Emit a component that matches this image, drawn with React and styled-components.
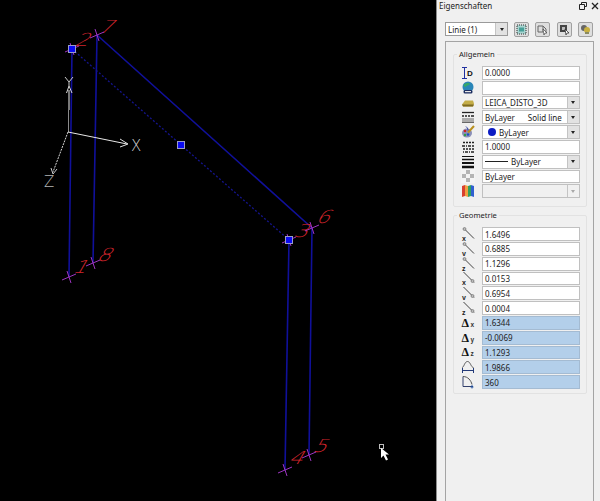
import React from 'react';
import styled, { createGlobalStyle } from 'styled-components';

const GlobalStyle = createGlobalStyle`
  html, body {
    margin: 0;
    padding: 0;
    background: #000;
  }
  #root {
    height: 501px;
  }
`;

const Screen = styled.div`
  display: flex;
  width: 600px;
  height: 501px;
  overflow: hidden;
  font-family: "Noto Sans", "Liberation Sans", sans-serif;
  font-size: 8px;
  color: #222;
`;

const Canvas = styled.div`
  width: 436px;
  height: 501px;
  background: #000;
  flex-shrink: 0;
`;

const Drawing = styled.svg`
  display: block;
`;

const Panel = styled.div`
  flex: 1;
  display: flex;
  flex-direction: column;
  background: #f0f0f0;
  border-left: 1px solid #8c8c8c;
`;

const TitleBar = styled.div`
  height: 19px;
  display: flex;
  align-items: center;
  justify-content: space-between;
  padding: 0 1px 8px 2px;
  box-sizing: border-box;
  font-size: 8px;
`;

const TitleIcons = styled.div`
  display: flex;
  align-items: center;
  gap: 4px;
`;

const Toolbar = styled.div`
  display: flex;
  align-items: center;
  height: 14px;
  margin: 3px 0 0 8px;
`;

const ObjectSelect = styled.div`
  width: 63px;
  height: 14px;
  box-sizing: border-box;
  display: flex;
  align-items: center;
  justify-content: space-between;
  background: #fff;
  border: 1px solid #9a9a9a;
  padding-left: 2px;
  margin-right: 6px;
`;

const ToolButton = styled.div`
  width: 15px;
  height: 15px;
  box-sizing: border-box;
  margin-right: 6.4px;
  display: flex;
  align-items: center;
  justify-content: center;
  background: #dedede;
  border: 1px solid #a0a0a0;
  border-radius: 2px;
`;

const Sheet = styled.div`
  flex: 1;
  margin: 5px 6px 0 8px;
  padding: 7px 6px 0 7px;
  border: 1px solid #a4a4a4;
  border-bottom: none;
`;

const Group = styled.fieldset`
  margin: 0 0 3px 0;
  padding: 6px 6px ${(props) => props.$bottom}px 7px;
  border: 1px solid #e2e2e2;
  border-radius: 2px;
  display: flex;
  flex-direction: column;
  gap: 1px;
  min-width: 0;
`;

const GroupTitle = styled.legend`
  padding: 0 2px;
  margin-left: -4px;
  font-size: 7.6px;
  line-height: 11px;
`;

const Row = styled.div`
  display: flex;
  align-items: center;
  height: 13.8px;
`;

const RowIcon = styled.div`
  width: 21px;
  flex-shrink: 0;
  display: flex;
  justify-content: flex-start;
`;

const Field = styled.div`
  width: 97.5px;
  height: 100%;
  box-sizing: border-box;
  display: flex;
  align-items: center;
  padding-left: 2px;
  white-space: nowrap;
  background: ${(props) => (props.$tone === 'calc' ? '#b3cfea' : props.$tone === 'off' ? '#f0f0f0' : '#fff')};
  border: 1px solid ${(props) => (props.$tone === 'calc' ? '#a4bbd2' : '#c0c0c0')};
`;

const FieldText = styled.span`
  flex: 1;
  display: flex;
  align-items: center;
  gap: 3px;
`;

const DropArrow = styled.div`
  width: 11px;
  height: 100%;
  flex-shrink: 0;
  display: flex;
  align-items: center;
  justify-content: center;
  background: ${(props) => (props.$off ? '#f0f0f0' : '#e2e2e2')};
  border-left: 1px solid #c4c4c4;
  &::after {
    content: '';
    border-left: 2.5px solid transparent;
    border-right: 2.5px solid transparent;
    border-top: 3px solid ${(props) => (props.$off ? '#a8a8a8' : '#222')};
  }
`;

const ColorDot = styled.span`
  width: 8px;
  height: 8px;
  margin-left: 3px;
  border-radius: 50%;
  background: #0c1cc4;
`;

const LineSample = styled.span`
  width: 23px;
  height: 1px;
  background: #222;
`;

const Gap = styled.span`
  width: ${(props) => props.$w}px;
`;

const Small = ({ children, w = 14, h = 14 }) => (
  <svg width={w} height={h} viewBox={`0 0 ${w} ${h}`}>{children}</svg>
);

const IconDim = () => (
  <Small>
    <path d="M1 1.500h5M1 12.500h5M3.500 2v10" stroke="#2030a0" strokeWidth="1" fill="none" />
    <text x="6" y="10" fontSize="8" fontWeight="700" fontFamily="Liberation Sans" fill="#111">D</text>
  </Small>
);
const IconGlobe = () => (
  <Small>
    <circle cx="7" cy="6" r="5.500" fill="#2a86b8" />
    <path d="M3 3.500c2-2 5-2 6-.5-1 2-4 1-4 3-2 0-3-1-2-2.500z" fill="#35a868" />
    <rect x="2.500" y="9" width="9" height="3.500" rx="1.500" fill="#1c2c60" />
    <rect x="4" y="10" width="6" height="1.200" fill="#e8e8e8" />
  </Small>
);
const IconLayer = () => (
  <Small>
    <path d="M1 8.500L4 4.500h8l1 3-1 3H2z" fill="#c4ad48" />
    <path d="M1 8.500h12l-1 2H2z" fill="#7d6a20" />
  </Small>
);
const IconLinetype = () => (
  <Small>
    <path d="M1 2.500h12" stroke="#222" strokeWidth="1.300" />
    <path d="M1 6h2M4 6h2M7 6h2M10 6h3" stroke="#222" strokeWidth="1.500" />
    <path d="M2 8v4M4 8v4M6 8v4M8 8v4M10 8v4M12 8v4M1 12.500h12" stroke="#444" strokeWidth="0.800" />
  </Small>
);
const IconPalette = () => (
  <Small>
    <ellipse cx="6" cy="8" rx="5" ry="4.500" fill="#8a8fb8" />
    <circle cx="4" cy="6" r="1.300" fill="#d02020" />
    <circle cx="7" cy="9.500" r="1.300" fill="#2050c0" />
    <circle cx="4" cy="10" r="1.200" fill="#30a040" />
    <path d="M13 1L7 7.500" stroke="#b89020" strokeWidth="2" />
    <path d="M5 1.500c1 1 2 2 2 4" stroke="#3040a0" strokeWidth="1" fill="none" />
  </Small>
);
const IconScale = () => (
  <Small>
    <path d="M2 2.500h2M5 2.500h2M8 2.500h2M11 2.500h2" stroke="#222" strokeWidth="1.500" />
    <path d="M1 6h3M5 6h1M7 6h3M11 6h2" stroke="#222" strokeWidth="1.500" />
    <path d="M2 9h2M5 9h2M8 9h2M11 9h2M2 12h1M4 12h3M8 12h1M10 12h3" stroke="#222" strokeWidth="1.500" />
  </Small>
);
const IconWeight = () => (
  <Small>
    <path d="M1 1.500h12" stroke="#111" strokeWidth="1" />
    <path d="M1 4.500h12" stroke="#111" strokeWidth="1.500" />
    <path d="M1 8h12" stroke="#111" strokeWidth="2" />
    <path d="M1 12h12" stroke="#111" strokeWidth="2.500" />
  </Small>
);
const IconChecker = () => (
  <Small>
    <rect x="0" y="0" width="14" height="14" fill="#f4f4f4" />
    <path d="M5 1h4v4H5zM1 5h4v4H1zM9 5h4v4H9zM5 9h4v4H5z" fill="#b4b4b4" />
  </Small>
);
const IconPlot = () => (
  <Small>
    <path d="M1 2l3-1v11l-3 1z" fill="#d84030" />
    <path d="M4 1l3 1v11l-3-1z" fill="#f0a040" />
    <path d="M7 2l3-1v11l-3 1z" fill="#30a060" />
    <path d="M10 1l3 1v11l-3-1z" fill="#3060d0" />
  </Small>
);

const IconEndpoint = ({ axis, end }) => (
  <Small>
    <path d="M2.500 1L13 11.500" stroke="#444" strokeWidth="1" />
    <circle cx={end ? 11.500 : 3.500} cy={end ? 10 : 2} r="1.500" fill="#bbb" stroke="#666" strokeWidth="0.600" />
    <text x="1" y="13.500" fontSize="7" fontWeight="700" fontFamily="Liberation Sans" fill="#222">{axis}</text>
  </Small>
);
const IconDelta = ({ axis }) => (
  <Small>
    <text x="0.500" y="11" fontSize="12" fontWeight="700" fontFamily="Liberation Serif" fill="#111">Δ</text>
    <text x="9.500" y="11" fontSize="6.500" fontWeight="700" fontFamily="Liberation Sans" fill="#333">{axis}</text>
  </Small>
);
const IconLength = () => (
  <Small>
    <path d="M1 7.500c2 0 2.500-6 5.500-6s3.500 6 6 6" stroke="#555" strokeWidth="1" fill="none" />
    <path d="M1.500 8v5M12.500 8v5M2 10.500h10" stroke="#233a78" strokeWidth="1" fill="none" />
  </Small>
);
const IconAngle = () => (
  <Small>
    <path d="M2 1.500v10h10" stroke="#33406c" strokeWidth="1" fill="none" />
    <path d="M2 1.500c5 0 8 4 9 8" stroke="#555" strokeWidth="1" fill="none" />
    <path d="M11 10v3.500M9.500 12h3" stroke="#2050a0" strokeWidth="0.900" />
  </Small>
);

const GENERAL_ROWS = [
  { icon: <IconDim />, text: '0.0000' },
  { icon: <IconGlobe />, text: '' },
  { icon: <IconLayer />, text: 'LEICA_DISTO_3D', drop: true },
  { icon: <IconLinetype />, text: <>ByLayer<Gap $w={7} />Solid line</>, drop: true },
  { icon: <IconPalette />, text: <><ColorDot />ByLayer</>, drop: true },
  { icon: <IconScale />, text: '1.0000' },
  { icon: <IconWeight />, text: <><LineSample />ByLayer</>, drop: true },
  { icon: <IconChecker />, text: 'ByLayer' },
  { icon: <IconPlot />, text: '', drop: true, tone: 'off' },
];

const GEOMETRY_ROWS = [
  { icon: <IconEndpoint axis="x" />, text: '1.6496' },
  { icon: <IconEndpoint axis="y" />, text: '0.6885' },
  { icon: <IconEndpoint axis="z" />, text: '1.1296' },
  { icon: <IconEndpoint axis="x" end />, text: '0.0153' },
  { icon: <IconEndpoint axis="y" end />, text: '0.6954' },
  { icon: <IconEndpoint axis="z" end />, text: '0.0004' },
  { icon: <IconDelta axis="x" />, text: '1.6344', tone: 'calc' },
  { icon: <IconDelta axis="y" />, text: '-0.0069', tone: 'calc' },
  { icon: <IconDelta axis="z" />, text: '1.1293', tone: 'calc' },
  { icon: <IconLength />, text: '1.9866', tone: 'calc' },
  { icon: <IconAngle />, text: '360', tone: 'calc' },
];

// snap points of the model, with the label that sits next to each one
const POINTS = [
  { n: '1', x: 69, y: 277, lx: 72, ly: 273 },
  { n: '2', x: 72, y: 49, lx: 74, ly: 46 },
  { n: '3', x: 289, y: 240, lx: 293, ly: 237 },
  { n: '4', x: 285, y: 470, lx: 288, ly: 464 },
  { n: '5', x: 309, y: 455, lx: 312, ly: 452 },
  { n: '6', x: 312, y: 228, lx: 315, ly: 223 },
  { n: '7', x: 97, y: 35, lx: 98, ly: 33 },
  { n: '8', x: 93, y: 263, lx: 96, ly: 261 },
];

const BLUE = '#10109a';

const Model = () => (
  <Drawing width="436" height="501" viewBox="0 0 436 501">
    <g stroke={BLUE} strokeWidth="1.600" fill="none">
      <path d="M72 49L69 277M97 35L93 263M289 240L285 470M312 228L309 455M97 35L312 228" />
      <path d="M72 49L289 240" strokeDasharray="2 2" strokeWidth="1.300" stroke="#14148c" />
    </g>
    {POINTS.map((p) => (
      <g key={p.n}>
        <text
          transform={`translate(${p.lx} ${p.ly}) skewX(-30) scale(1.2 1)`}
          fontFamily="DejaVu Sans"
          fontWeight="200"
          fontSize="18"
          fill="#d0242c"
        >
          {p.n}
        </text>
        <path
          d={`M${p.x - 7} ${p.y + 3}L${p.x + 7} ${p.y - 3}M${p.x - 2} ${p.y - 6}L${p.x + 2} ${p.y + 6}`}
          stroke="#9c34c0"
          strokeWidth="1"
        />
      </g>
    ))}
    <g fill="#0a0af0" stroke="#9a9ac8" strokeWidth="1">
      <rect x="68.500" y="45.500" width="7" height="7" />
      <rect x="177.500" y="141.500" width="7" height="7" />
      <rect x="285.500" y="236.500" width="7" height="7" />
    </g>
    <g fill="none" strokeWidth="1">
      <path d="M69 90V110" stroke="#f0f0f0" />
      <path d="M68.500 110V132" stroke="#8a8a8a" />
      <path d="M66.500 93L69 86L72 93" stroke="#d8d8d8" />
      <path d="M65 77L69 82L73 77M69 82V86" stroke="#c8c8c8" />
      <path d="M68 132L127 144" stroke="#e8e8e8" />
      <path d="M120 139L128 144L120 147" stroke="#e0e0e0" />
      <path d="M68 132L53 172" stroke="#d8d8d8" strokeDasharray="2 1" />
      <path d="M51 168L53 174L57 169" stroke="#c8c8c8" />
    </g>
    <text x="131" y="151" fontFamily="DejaVu Sans" fontWeight="200" fontSize="15" fill="#d4d4d4">X</text>
    <text x="44" y="187" fontFamily="DejaVu Sans" fontWeight="200" fontSize="15" fill="#b4b4b4">Z</text>
    <rect x="379.500" y="444.500" width="4" height="4" fill="none" stroke="#bdbdbd" strokeWidth="1" />
    <path d="M381 448V458L383.500 455.500L386 460.500L388 459.500L385.500 454.500L389 454.500Z" fill="#fff" />
  </Drawing>
);

const renderRow = (row, i) => (
  <Row key={i}>
    <RowIcon>{row.icon}</RowIcon>
    <Field $tone={row.tone}>
      <FieldText>{row.text}</FieldText>
      {row.drop && <DropArrow $off={row.tone === 'off'} />}
    </Field>
  </Row>
);

const App = () => (
  <>
    <GlobalStyle />
    <Screen>
      <Canvas>
        <Model />
      </Canvas>
      <Panel>
        <TitleBar>
          Eigenschaften
          <TitleIcons>
            <svg width="8" height="8" viewBox="0 0 8 8">
              <path d="M2.500 2.500V.5h5v4H5.500M.5 2.500h5v5h-5z" fill="none" stroke="#222" strokeWidth="1" />
            </svg>
            <svg width="8" height="8" viewBox="0 0 8 8">
              <path d="M1 1l6 6M7 1L1 7" stroke="#222" strokeWidth="1.300" />
            </svg>
          </TitleIcons>
        </TitleBar>
        <Toolbar>
          <ObjectSelect>
            Linie (1)
            <DropArrow />
          </ObjectSelect>
          <ToolButton>
            <svg width="11" height="11" viewBox="0 0 11 11">
              <rect x="1" y="1" width="9" height="9" fill="#a8d4d0" stroke="#333" strokeWidth="1" strokeDasharray="1 1" />
              <rect x="3" y="3.500" width="5" height="4" fill="#48a098" />
            </svg>
          </ToolButton>
          <ToolButton>
            <svg width="11" height="11" viewBox="0 0 11 11">
              <path d="M1 2h5v6H1zM6 2l3 3v4" fill="#ddd" stroke="#666" strokeWidth="1" />
              <path d="M6 5l4 4-2 0-1 2z" fill="#fff" stroke="#444" strokeWidth="0.700" />
            </svg>
          </ToolButton>
          <ToolButton>
            <svg width="11" height="11" viewBox="0 0 11 11">
              <rect x="1" y="1" width="7" height="7" fill="#444" />
              <rect x="3" y="3" width="3" height="3" fill="#bbb" />
              <path d="M6 5l4 4-2 0-1 2z" fill="#fff" stroke="#222" strokeWidth="0.700" />
            </svg>
          </ToolButton>
          <ToolButton>
            <svg width="11" height="11" viewBox="0 0 11 11">
              <circle cx="4" cy="4" r="3" fill="#666" />
              <circle cx="7" cy="6" r="3" fill="#c8b040" />
              <path d="M5 8h4v2H5z" fill="#8a8a60" />
            </svg>
          </ToolButton>
        </Toolbar>
        <Sheet>
          <Group $bottom={8}>
            <GroupTitle>Allgemein</GroupTitle>
            {GENERAL_ROWS.map(renderRow)}
          </Group>
          <Group $bottom={4}>
            <GroupTitle>Geometrie</GroupTitle>
            {GEOMETRY_ROWS.map(renderRow)}
          </Group>
        </Sheet>
      </Panel>
    </Screen>
  </>
);

export default App;
